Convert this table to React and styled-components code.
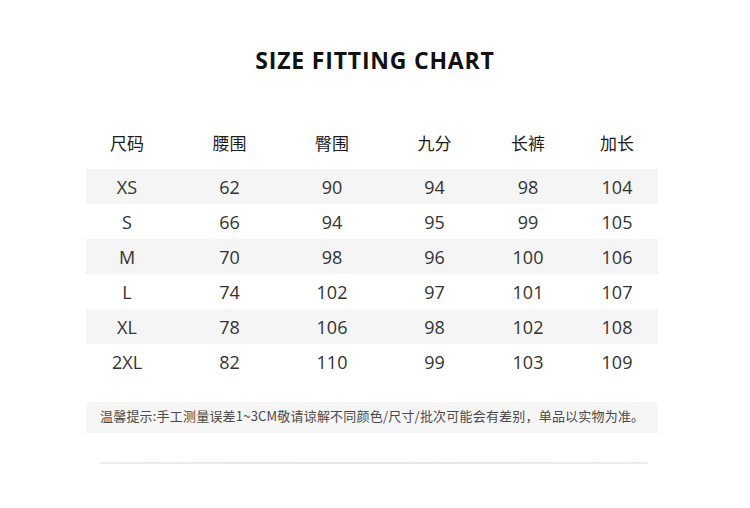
import React from "react";
import styled, { createGlobalStyle } from "styled-components";

const Global = createGlobalStyle`
  html, body { margin: 0; padding: 0; background: #ffffff; }
  body { font-family: "Open Sans", "Noto Sans CJK SC", sans-serif; }
`;

const Page = styled.div`
  width: 750px;
  height: 508px;
  background: #fff;
  padding-top: 45px;
  box-sizing: border-box;
  overflow: hidden;
`;

const Title = styled.h1`
  margin: 0;
  height: 30px;
  line-height: 30px;
  text-align: center;
  font-family: "Open Sans", sans-serif;
  font-weight: 700;
  font-size: 23px;
  color: #111;
  letter-spacing: 0.8px;
`;

const Table = styled.div`
  width: 572px;
  margin: 50px 0 0 86px;
  display: flex;
  flex-direction: column;
`;

const Row = styled.div`
  display: grid;
  grid-template-columns: 82px 123px 82px 123px 64px 114px;
  width: 572px;
  height: ${(p) => (p.$head ? "34px" : "35px")};
  margin-bottom: ${(p) => (p.$head ? "10px" : "0")};
  align-items: center;
  background: ${(p) => (p.$striped ? "#f5f5f5" : "transparent")};
`;

const Cell = styled.div`
  text-align: center;
  white-space: nowrap;
  font-family: ${(p) =>
    p.$head ? '"Noto Sans CJK SC", sans-serif' : '"Open Sans", "Noto Sans CJK SC", sans-serif'};
  font-size: ${(p) => (p.$head ? "17px" : "18px")};
  color: ${(p) => (p.$head ? "#1c1c1c" : "#333")};
  line-height: 1;
`;

const Note = styled.div`
  width: 572px;
  height: 31px;
  margin: 23px 0 0 86px;
  box-sizing: border-box;
  padding: 0 0 4px 14px;
  display: flex;
  align-items: center;
  background: #f6f6f6;
  font-family: "Noto Sans CJK SC", sans-serif;
  font-size: 13px;
  color: #4a4a4a;
  white-space: nowrap;
  letter-spacing: 0.2px;
`;

const Rule = styled.div`
  width: 548px;
  height: 2px;
  margin: 29px 0 0 100px;
  background: linear-gradient(to right, #ececec, #e6e6e6 50%, #ececec);
`;

const headers = ["尺码", "腰围", "臀围", "九分", "长裤", "加长"];
const rows = [
  ["XS", 62, 90, 94, 98, 104],
  ["S", 66, 94, 95, 99, 105],
  ["M", 70, 98, 96, 100, 106],
  ["L", 74, 102, 97, 101, 107],
  ["XL", 78, 106, 98, 102, 108],
  ["2XL", 82, 110, 99, 103, 109],
];

export default function App() {
  return (
    <Page>
      <Global />
      <Title>SIZE FITTING CHART</Title>
      <Table>
        <Row $head>
          {headers.map((h) => (
            <Cell key={h} $head>
              {h}
            </Cell>
          ))}
        </Row>
        {rows.map((r, i) => (
          <Row key={r[0]} $striped={i % 2 === 0}>
            {r.map((v, j) => (
              <Cell key={j}>{v}</Cell>
            ))}
          </Row>
        ))}
      </Table>
      <Note>温馨提示:手工测量误差1~3CM敬请谅解不同颜色/尺寸/批次可能会有差别，单品以实物为准。</Note>
      <Rule />
    </Page>
  );
}
